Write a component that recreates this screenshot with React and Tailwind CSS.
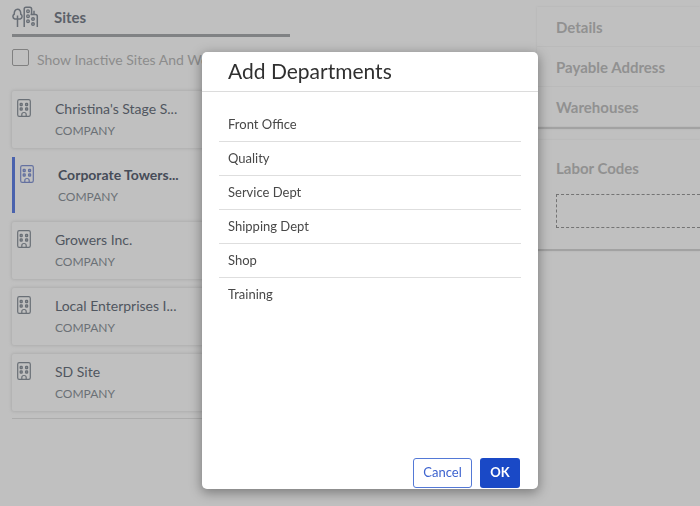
import React from "react";

const sites = [
  { name: "Christina's Stage S..." },
  { name: "Corporate Towers...", selected: true },
  { name: "Growers Inc." },
  { name: "Local Enterprises I..." },
  { name: "SD Site" },
];

const departments = ["Front Office", "Quality", "Service Dept", "Shipping Dept", "Shop", "Training"];

const sections = ["Details", "Payable Address", "Warehouses"];

function SitesIcon() {
  return (
    <svg width="28" height="22" viewBox="0 0 28 22" fill="none" stroke="#686e76" strokeWidth="1.5" aria-hidden="true">
      <path d="M5.500 21V9.500M2.800 13C.4 12.400.4 9 2.200 8.200 2.200 5 3.500 3.300 5.500 3.300S8.800 5 8.800 8.200C10.600 9 10.600 12.400 8.200 13Z" />
      <path d="M12.200 21V3Q12.200 1.200 14 1.200H17.800Q19.600 1.200 19.600 3V8M22 8V4.800M18.500 8.500H23.500Q25.300 8.500 25.300 10.300V21" />
      <g strokeWidth="1.400">
        <circle cx="16" cy="5.200" r="1.300" />
        <circle cx="16" cy="10.200" r="1.300" />
        <circle cx="16" cy="15.200" r="1.300" />
        <circle cx="21" cy="13" r="1.300" />
        <circle cx="21" cy="18" r="1.300" />
      </g>
    </svg>
  );
}

function BuildingIcon({ selected }) {
  return (
    <svg
      className="shrink-0"
      width="14"
      height="18"
      viewBox="0 0 14 18"
      fill="none"
      stroke={selected ? "#6471a0" : "#696f76"}
      strokeWidth="1.200"
      aria-hidden="true"
    >
      <rect x=".7" y=".7" width="12.600" height="16.600" rx="1.600" />
      <g strokeWidth="1.300">
        <rect x="3.200" y="4.500" width="2" height="2" rx=".6" />
        <rect x="8.600" y="4.500" width="2" height="2" rx=".6" />
        <rect x="3.200" y="9" width="2" height="2" rx=".6" />
        <rect x="8.600" y="9" width="2" height="2" rx=".6" />
      </g>
      <path d="M4.800 17.300V15.500Q4.800 13.500 7 13.500T9.200 15.500V17.300" />
    </svg>
  );
}

function SiteCard({ name, selected }) {
  return (
    <li
      className={
        selected
          ? "flex h-14 items-start gap-6 border-l-3 border-[#4a62ad] pl-[5px] pt-2"
          : "flex h-[57px] items-start gap-6 rounded-xs pl-[5px] pt-2 shadow-[0_0_3px_1px_#aeaeae]"
      }
    >
      <BuildingIcon selected={selected} />
      <div>
        <p className={selected ? "text-[14px] leading-[19px] font-bold text-[#464c58]" : "text-[14px] leading-[19px] text-[#50565f]"}>
          {name}
        </p>
        <p className="mt-[3px] text-[12px] leading-5 text-[#6b7076]">COMPANY</p>
      </div>
    </li>
  );
}

export default function App() {
  return (
    <div className="min-h-screen overflow-hidden bg-[#c0c0c0] font-['Lato','Open_Sans',sans-serif]">
      <main className="flex gap-[247px]">
        <section className="ml-3 w-[278px] shrink-0">
          <header className="flex h-[37px] items-center gap-[14px] border-b-3 border-[#808284]">
            <SitesIcon />
            <h1 className="text-[15px] font-bold text-[#5b6069]">Sites</h1>
          </header>
          <label className="mt-2 flex h-7 items-center gap-2 text-[14px] whitespace-nowrap text-[#8c8c8c]">
            <input
              type="checkbox"
              className="mb-1 h-[17px] w-[17px] shrink-0 appearance-none rounded-xs border border-[#808080]"
            />
            Show Inactive Sites And Wo
          </label>
          <ul className="mt-[18px] flex flex-col gap-[9px]">
            {sites.map((site) => (
              <SiteCard key={site.name} {...site} />
            ))}
          </ul>
          <hr className="mt-[7px] border-[#acacac]" />
        </section>

        <section className="min-w-0 flex-1 pt-[7px] text-[15px] font-bold text-[#919191]">
          <div className="border-b-2 border-[#a2a2a2] shadow-[0_0_2px_#b0b0b0]">
            {sections.map((title) => (
              <h2 key={title} className="flex h-10 items-center border-b border-[#bababa] pt-px pl-[19px]">
                {title}
              </h2>
            ))}
          </div>
          <div className="mt-[11px] h-[111px] border-b-2 border-[#a2a2a2] pt-[18px] pl-[19px] shadow-[0_0_2px_#b0b0b0]">
            <h2 className="leading-5">Labor Codes</h2>
            <div className="mt-4 h-[34px] border border-r-0 border-dashed border-[#747474]" />
          </div>
        </section>
      </main>

      <div className="fixed inset-0 flex items-start justify-center pt-13 pl-10">
        <div
          role="dialog"
          aria-modal="true"
          aria-labelledby="dialog-title"
          className="flex w-[336px] flex-col rounded-[5px] bg-white shadow-[0_3px_12px_1px_rgba(0,0,0,0.35)]"
        >
          <h2
            id="dialog-title"
            className="h-10 border-b border-[#dcdcdc] pl-[26px] text-[21px] leading-[38px] text-[#303030]"
          >
            Add Departments
          </h2>
          <ul className="h-[366px] px-[17px] pt-4 text-[13px] text-[#484848]">
            {departments.map((department) => (
              <li
                key={department}
                className="flex h-[34px] items-center border-b border-[#dedede] pl-[9px] last:border-b-0"
              >
                {department}
              </li>
            ))}
          </ul>
          <div className="flex justify-end gap-2 pr-[18px] pb-px">
            <button
              type="button"
              className="h-[30px] w-[59px] rounded-[3px] border border-[#5479d6] text-[13px] text-[#3d63cf]"
            >
              Cancel
            </button>
            <button type="button" className="h-[30px] w-10 rounded-[3px] bg-[#1a49c6] text-[13px] font-bold text-white">
              OK
            </button>
          </div>
        </div>
      </div>
    </div>
  );
}
